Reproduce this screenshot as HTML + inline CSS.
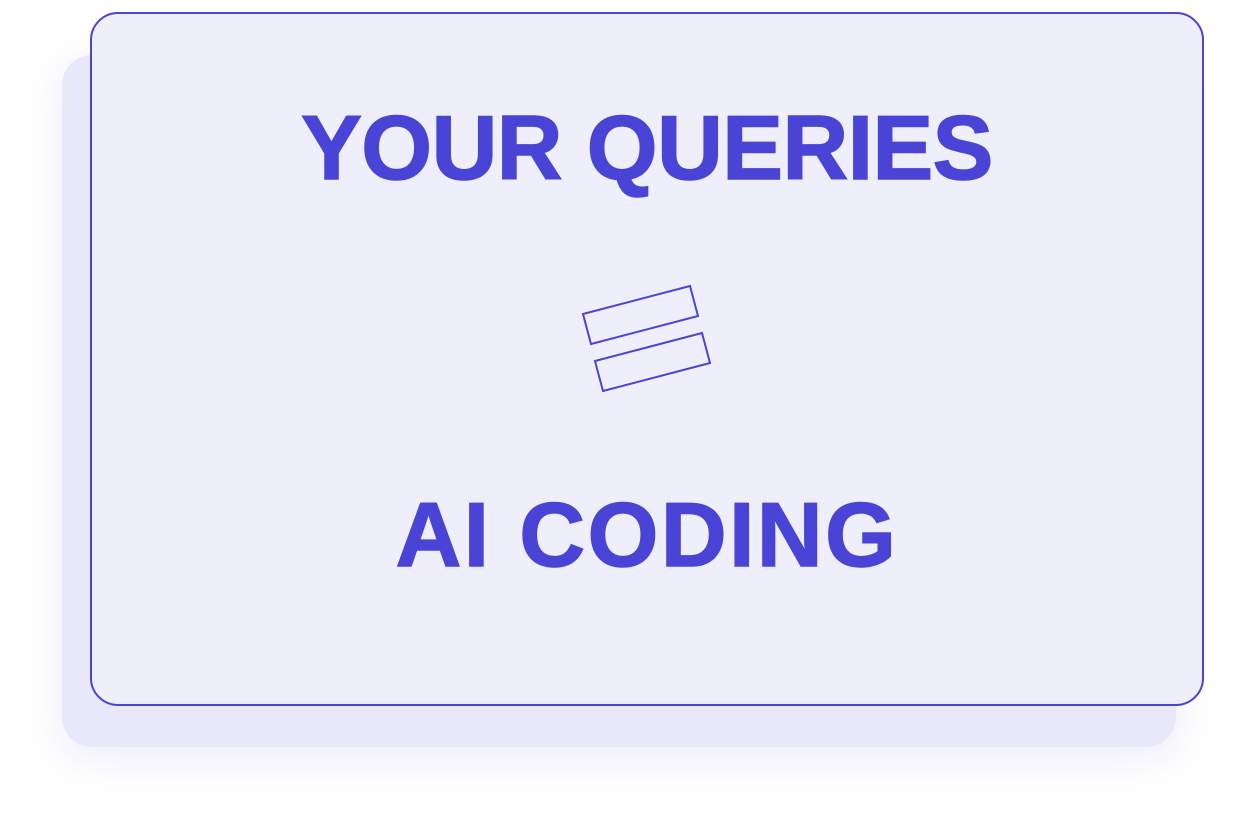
<!DOCTYPE html>
<html><head><meta charset="utf-8"><style>
html,body{margin:0;padding:0;background:#fff;width:1238px;height:818px;overflow:hidden;position:relative;font-family:"Liberation Sans",sans-serif}
.back{position:absolute;left:62px;top:55px;width:1114px;height:692px;border-radius:30px;background:#e8e8fa;box-shadow:0 10px 40px rgba(90,90,200,0.12)}
.card{position:absolute;left:90px;top:12px;width:1110px;height:690px;border-radius:28px;background:#efeffc;border:2px solid #4a44d4}
.t{position:absolute;left:56px;width:1182px;text-align:center;color:#4a44d6;font-weight:bold;font-size:91px;line-height:1;-webkit-text-stroke:1.5px #4a44d6}
</style></head><body>
<div class="back"></div>
<div class="card"></div>
<div class="t" style="top:103px;letter-spacing:-0.5px">YOUR QUERIES</div>
<div class="t" style="top:490px;letter-spacing:2.5px">AI CODING</div>
<svg style="position:absolute;left:0;top:0" width="1238" height="818">
<polygon points="583,314 690,286 698,316 591,344" fill="none" stroke="#4a44d6" stroke-width="2"/>
<polygon points="595,361 702,333 710,363 603,391" fill="none" stroke="#4a44d6" stroke-width="2"/>
</svg>
</body></html>
